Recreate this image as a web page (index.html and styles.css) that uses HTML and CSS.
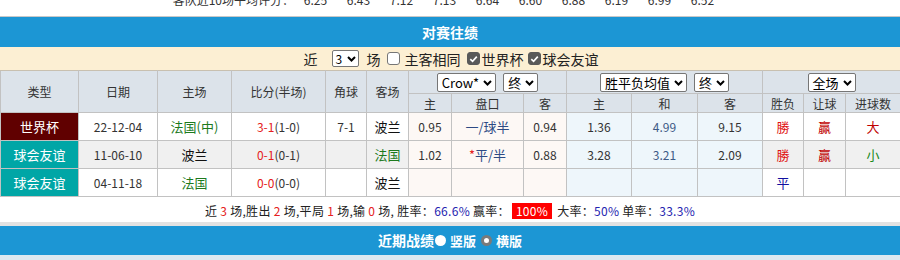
FILE: index.html
```html
<!DOCTYPE html>
<html lang="zh-CN">
<head>
<meta charset="utf-8">
<title>对赛往绩</title>
<link rel="stylesheet" href="styles.css">
</head>
<body>
<div class="avg">
  <div class="avg-row">
    <div class="avg-label">客队近10场平均评分：</div>
    <div class="avg-num">6.25</div>
    <div class="avg-num">6.43</div>
    <div class="avg-num">7.12</div>
    <div class="avg-num">7.13</div>
    <div class="avg-num">6.64</div>
    <div class="avg-num">6.60</div>
    <div class="avg-num">6.88</div>
    <div class="avg-num">6.19</div>
    <div class="avg-num">6.99</div>
    <div class="avg-num">6.52</div>
  </div>
</div>

<div class="bar">对赛往绩</div>

<div class="filter">
  <span class="f-txt">近</span>
  <span class="sel sel-num">3<svg class="chev" viewBox="0 0 9 6" width="9" height="6"><path d="M1 1 L4.5 4.5 L8 1" fill="none" stroke="#000" stroke-width="2"/></svg></span>
  <span class="f-txt">场</span>
  <span class="cb"></span>
  <span class="f-txt">主客相同</span>
  <span class="cb cb-on"><svg viewBox="0 0 12 12" width="12" height="12"><path d="M2.5 6.2 L5 8.6 L9.6 3.4" fill="none" stroke="#fff" stroke-width="1.8"/></svg></span>
  <span class="f-txt f-tight">世界杯</span>
  <span class="cb cb-on"><svg viewBox="0 0 12 12" width="12" height="12"><path d="M2.5 6.2 L5 8.6 L9.6 3.4" fill="none" stroke="#fff" stroke-width="1.8"/></svg></span>
  <span class="f-txt f-tight">球会友谊</span>
</div>

<table class="h2h">
  <colgroup>
    <col class="w78"><col class="w79"><col class="w74"><col class="w94"><col class="w41"><col class="w42">
    <col class="w43"><col class="w72"><col class="w43">
    <col class="w65"><col class="w66"><col class="w65">
    <col class="w41"><col class="w42"><col class="w55">
  </colgroup>
  <thead>
    <tr class="hr1">
      <th rowspan="2">类型</th>
      <th rowspan="2">日期</th>
      <th rowspan="2">主场</th>
      <th rowspan="2">比分(半场)</th>
      <th rowspan="2">角球</th>
      <th rowspan="2">客场</th>
      <th colspan="3"><span class="sels"><span class="sel">Crow*<svg class="chev" viewBox="0 0 9 6" width="9" height="6"><path d="M1 1 L4.5 4.5 L8 1" fill="none" stroke="#000" stroke-width="2"/></svg></span><span class="sel">终<svg class="chev" viewBox="0 0 9 6" width="9" height="6"><path d="M1 1 L4.5 4.5 L8 1" fill="none" stroke="#000" stroke-width="2"/></svg></span></span></th>
      <th colspan="3"><span class="sels"><span class="sel">胜平负均值<svg class="chev" viewBox="0 0 9 6" width="9" height="6"><path d="M1 1 L4.5 4.5 L8 1" fill="none" stroke="#000" stroke-width="2"/></svg></span><span class="sel">终<svg class="chev" viewBox="0 0 9 6" width="9" height="6"><path d="M1 1 L4.5 4.5 L8 1" fill="none" stroke="#000" stroke-width="2"/></svg></span></span></th>
      <th colspan="3"><span class="sels"><span class="sel">全场<svg class="chev" viewBox="0 0 9 6" width="9" height="6"><path d="M1 1 L4.5 4.5 L8 1" fill="none" stroke="#000" stroke-width="2"/></svg></span></span></th>
    </tr>
    <tr class="hr2">
      <th>主</th><th>盘口</th><th>客</th>
      <th>主</th><th>和</th><th>客</th>
      <th>胜负</th><th>让球</th><th>进球数</th>
    </tr>
  </thead>
  <tbody>
    <tr class="row">
      <td class="type t-wc">世界杯</td>
      <td>22-12-04</td>
      <td class="green">法国(中)</td>
      <td><span class="red">3-1</span>(1-0)</td>
      <td>7-1</td>
      <td class="dark">波兰</td>
      <td class="o1">0.95</td>
      <td class="o1 hc">一/球半</td>
      <td class="o1">0.94</td>
      <td class="o2">1.36</td>
      <td class="o2 mid">4.99</td>
      <td class="o2">9.15</td>
      <td class="win">勝</td>
      <td class="win2">贏</td>
      <td class="win2">大</td>
    </tr>
    <tr class="row alt">
      <td class="type t-fr">球会友谊</td>
      <td>11-06-10</td>
      <td class="dark">波兰</td>
      <td><span class="red">0-1</span>(0-1)</td>
      <td></td>
      <td class="green">法国</td>
      <td class="o1">1.02</td>
      <td class="o1 hc"><span class="red">*</span>平/半</td>
      <td class="o1">0.88</td>
      <td class="o2">3.28</td>
      <td class="o2 mid">3.21</td>
      <td class="o2">2.09</td>
      <td class="win">勝</td>
      <td class="win2">贏</td>
      <td class="small">小</td>
    </tr>
    <tr class="row">
      <td class="type t-fr">球会友谊</td>
      <td>04-11-18</td>
      <td class="green">法国</td>
      <td><span class="red">0-0</span>(0-0)</td>
      <td></td>
      <td class="dark">波兰</td>
      <td class="o1"></td>
      <td class="o1"></td>
      <td class="o1"></td>
      <td class="o2"></td>
      <td class="o2"></td>
      <td class="o2"></td>
      <td class="draw">平</td>
      <td></td>
      <td></td>
    </tr>
  </tbody>
</table>

<div class="summary">
  近 <span class="red">3</span> 场,胜出 <span class="red">2</span> 场,平局 <span class="red">1</span> 场,输 <span class="red">0</span> 场, 胜率：<span class="blue">66.6%</span> 赢率：<span class="hl">100%</span> 大率：<span class="blue">50%</span> 单率：<span class="blue">33.3%</span>
</div>

<div class="bar bar2">
  <span>近期战绩</span>
  <span class="radio"></span>
  <span class="r-txt">竖版</span>
  <span class="radio radio-on"></span>
  <span class="r-txt">横版</span>
</div>
<div class="foot"></div>
</body>
</html>
```

FILE: styles.css
```css
html, body {
  margin: 0;
  padding: 0;
  background: #fff;
}

body {
  width: 900px;
  overflow: hidden;
  font-family: "Noto Sans CJK SC", "Microsoft YaHei", sans-serif;
  font-size: 12px;
  color: #333;
}

/* top average line (cut off at the top edge, as in the source) */
.avg {
  height: 16px;
  border-bottom: 1px solid #c8c8c8;
  overflow: hidden;
}

.avg-row {
  display: flex;
  margin-top: -8px;
  line-height: 16px;
  font-size: 12px;
  color: #333;
}

.avg-label {
  width: 294px;
  text-align: right;
}

.avg-num {
  width: 43px;
  text-align: center;
}

/* blue title bars */
.bar {
  height: 30px;
  background: #1c96d4;
  color: #fff;
  font-weight: bold;
  font-size: 14px;
  line-height: 30px;
  text-align: center;
}

.bar2 {
  height: 29px;
  line-height: 29px;
  display: flex;
  justify-content: center;
  align-items: center;
}

/* filter row */
.filter {
  height: 23px;
  background: #fcefd3;
  display: flex;
  justify-content: center;
  align-items: center;
  font-size: 14px;
  color: #222;
}

.f-txt {
  margin: 0 4px;
}

.f-tight {
  margin: 0 2px 0 1px;
}

.sel {
  display: inline-flex;
  align-items: center;
  justify-content: space-between;
  gap: 4px;
  padding: 0 3px 0 4px;
  border: 1px solid #767676;
  border-radius: 2px;
  background: #fff;
  color: #000;
  font-size: 13px;
  line-height: 17px;
  box-sizing: border-box;
  height: 19px;
}

.sel-num {
  height: 17px;
  width: 27px;
  padding: 0 2px 0 3px;
  margin: 0 4px 0 10px;
  font-size: 12px;
}

.chev {
  display: block;
  flex: none;
}

.cb {
  display: inline-flex;
  align-items: center;
  justify-content: center;
  width: 13px;
  height: 13px;
  box-sizing: border-box;
  border: 1px solid #767676;
  border-radius: 3px;
  background: #fff;
  margin: 0 1px 0 2px;
}

.cb-on {
  background: #595959;
  border-color: #595959;
}

.cb-on svg {
  display: block;
}

/* main table */
.h2h {
  width: 900px;
  border-collapse: collapse;
  table-layout: fixed;
  border-spacing: 0;
}

.h2h th,
.h2h td {
  border: 1px solid #c2c2c2;
  padding: 0;
  text-align: center;
  vertical-align: middle;
  font-size: 12px;
  white-space: nowrap;
  overflow: hidden;
}

.h2h th {
  background: #dce3ea;
  font-weight: normal;
  color: #333;
}

.h2h thead tr:first-child th {
  border-top-color: #c8c0b0;
}

.w78 { width: 78px; }
.w79 { width: 79px; }
.w74 { width: 74px; }
.w94 { width: 94px; }
.w41 { width: 41px; }
.w42 { width: 42px; }
.w43 { width: 43px; }
.w72 { width: 72px; }
.w65 { width: 65px; }
.w66 { width: 66px; }
.w55 { width: 55px; }

.hr1 { height: 23px; }
.hr2 { height: 19px; }
.row { height: 28px; }

.sels {
  display: inline-flex;
  gap: 7px;
  vertical-align: middle;
}

.h2h td {
  background: #fff;
  color: #333;
}

.h2h .alt td {
  background: #f0f0f0;
}

.h2h td.type {
  color: #fff;
  font-size: 13px;
}

.h2h td.t-wc { background: #600000; }
.h2h td.t-fr { background: #00a6a6; }

.h2h td.o1 { background: #fdf8f5; }
.h2h td.o2 { background: #eef6fb; }

.green { color: #1d7a1d; }
.h2h td.green { color: #1d7a1d; font-size: 13px; }
.h2h td.dark { color: #111; font-size: 13px; }
.red { color: #e52020; }
.hc { color: #2d4a84; }
.h2h td.hc { color: #2d4a84; font-size: 13px; }
.h2h td.mid { color: #3d5a86; }
.h2h td.win { color: #e01010; font-size: 13px; }
.h2h td.win2 { color: #c00000; font-size: 13px; }
.h2h td.small { color: #1a8a1a; font-size: 13px; }
.h2h td.draw { color: #1010a0; font-size: 13px; }

/* summary */
.summary {
  height: 25px;
  line-height: 27px;
  text-align: center;
  font-size: 12px;
  letter-spacing: 0.3px;
  color: #222;
  border-bottom: 4px solid #e2e2e2;
}

.blue { color: #2424b0; }

.hl {
  display: inline-block;
  background: #ff0000;
  color: #fff;
  padding: 0 4px;
  margin: 0 2px;
  line-height: 16px;
}

/* radios */
.radio {
  display: inline-block;
  width: 11px;
  height: 11px;
  border-radius: 50%;
  background: #fff;
  margin: 0 4px 0 1px;
  box-sizing: border-box;
}

.radio-on {
  border: 3px solid #7a7a7a;
  background: #fff;
  margin-left: 5px;
}

.r-txt {
  font-size: 13px;
}

.foot {
  height: 10px;
  background: #dce8f0;
}
```
